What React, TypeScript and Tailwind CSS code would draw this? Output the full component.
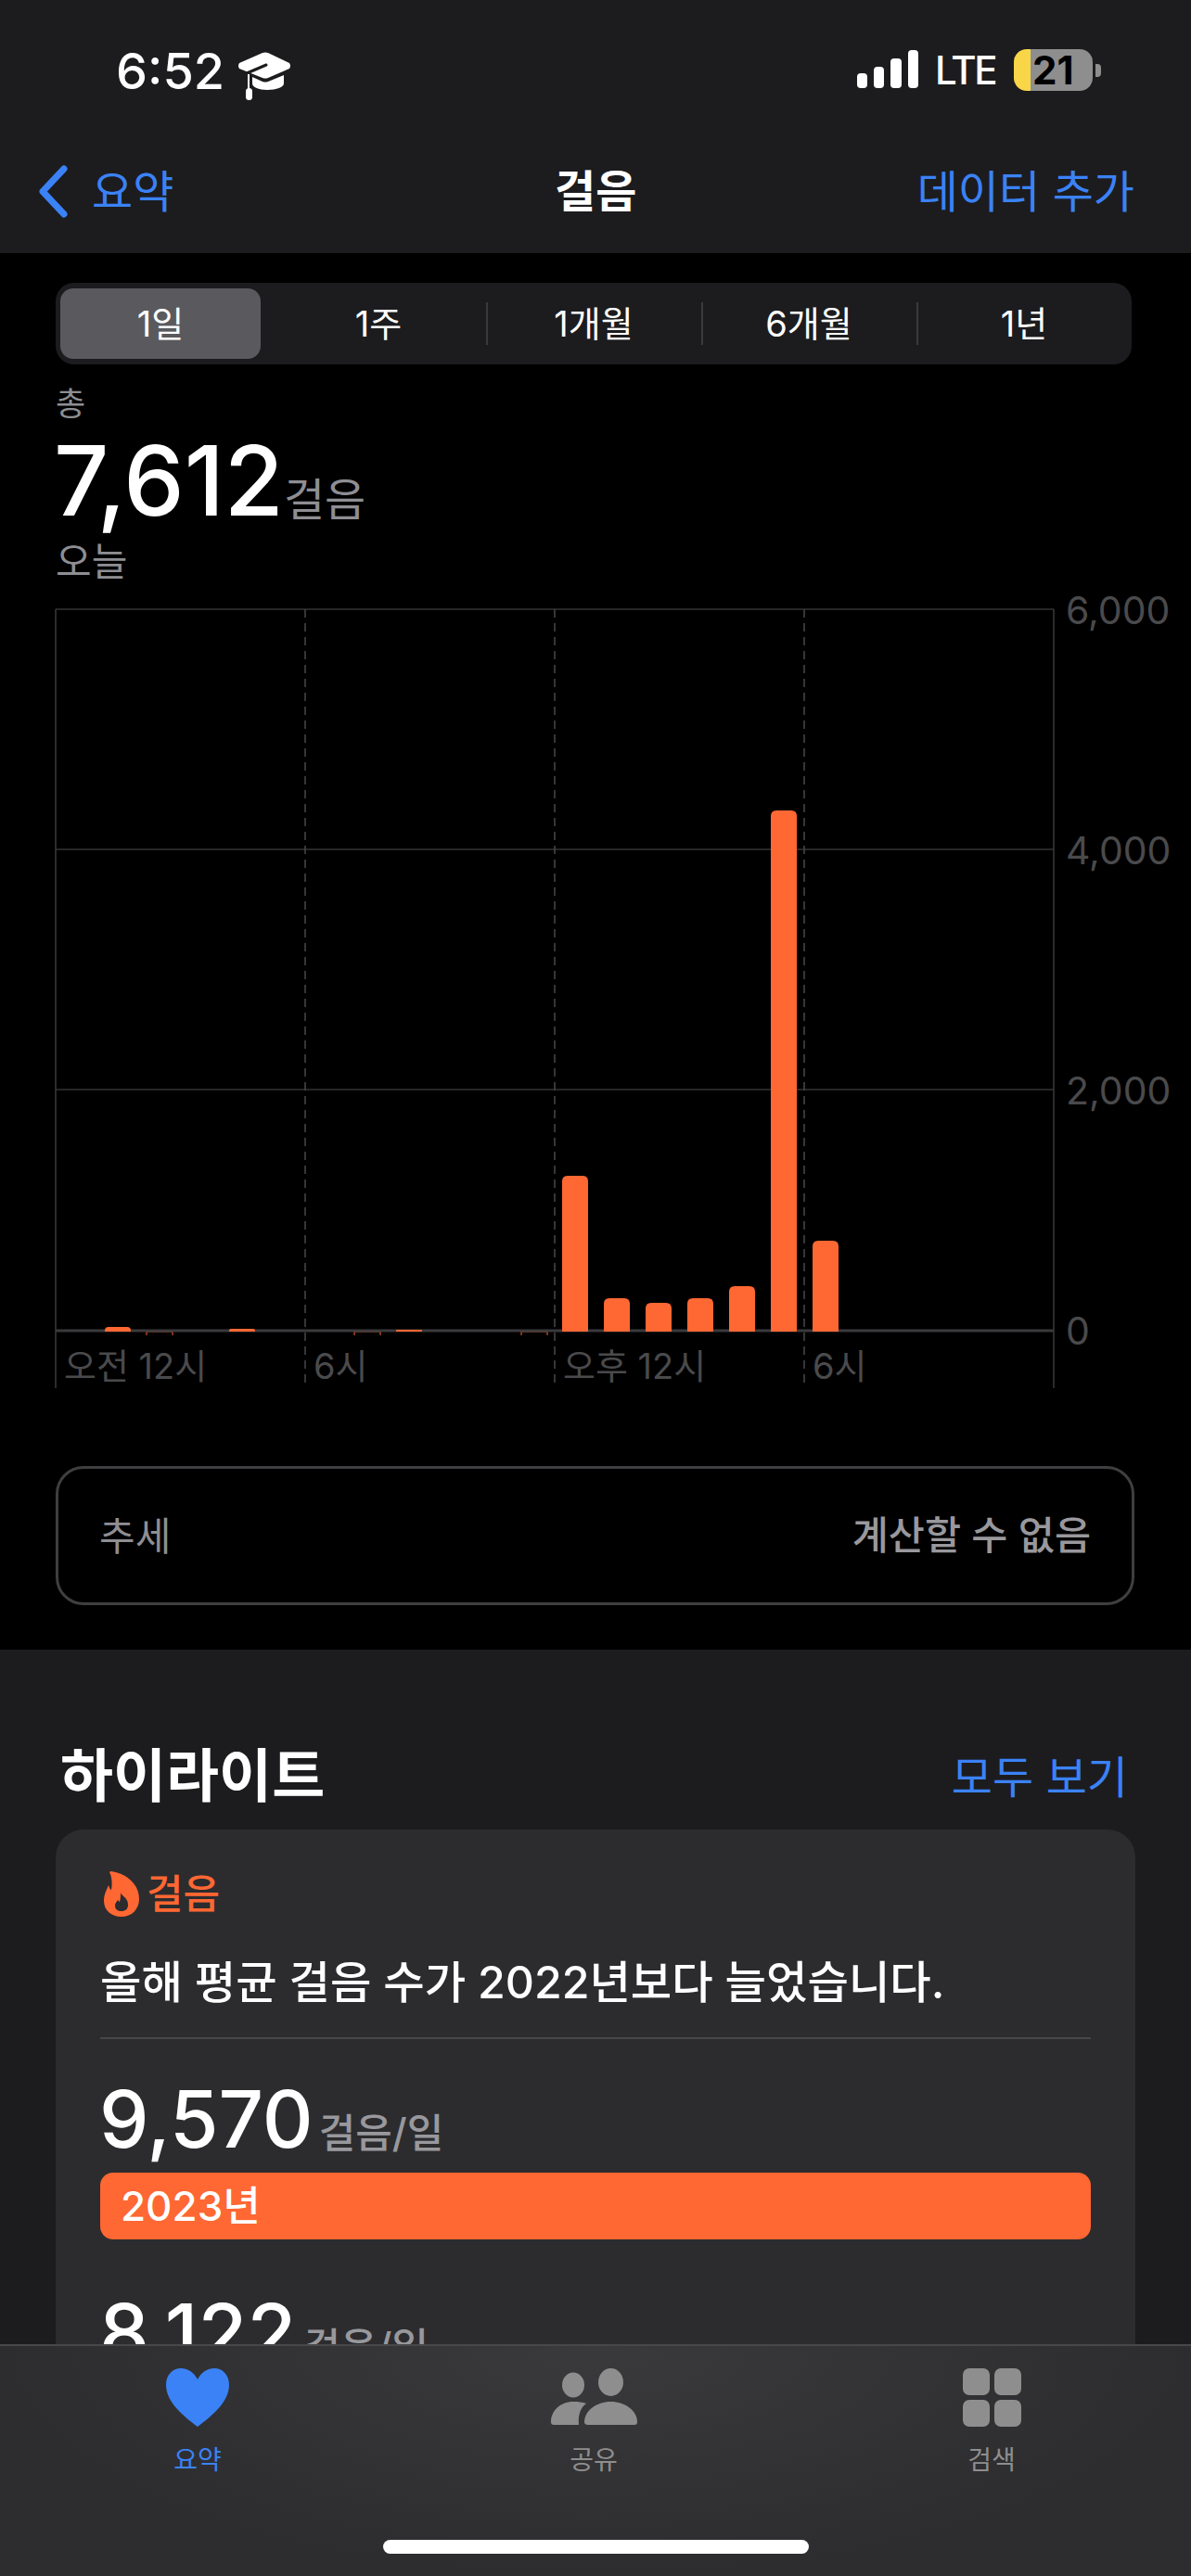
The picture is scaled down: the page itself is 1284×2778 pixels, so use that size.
import React from "react";

const ranges = ["1일", "1주", "1개월", "6개월", "1년"];

// hourly bars: left edge and top in px of the plot
const bars = [
  { x: 113, top: 1431 },
  { x: 247, top: 1433 },
  { x: 427, top: 1434 },
  { x: 606, top: 1268 },
  { x: 651, top: 1400 },
  { x: 696, top: 1405 },
  { x: 741, top: 1400 },
  { x: 786, top: 1387 },
  { x: 831, top: 874 },
  { x: 876, top: 1338 },
];
const tinyBars = [158, 382, 562];

function HatIcon() {
  return (
    <svg width="58" height="52" viewBox="0 0 58 52" fill="#fff">
      <path d="M27 1 Q30 0 33 1 L56 12 Q58 15 56 18 L33 28 Q30 29 27 28 L2 18 Q0 15 2 12Z" />
      <path d="M31 14 L10 23" stroke="#1c1c1e" strokeWidth="3" strokeLinecap="round" />
      <path d="M16 27 L27 32 Q30 33 33 32 L50 25 V34 C50 38 42 41 32 41 C23 41 16 38 16 34Z" />
      <path d="M12 24 V40" stroke="#fff" strokeWidth="2" />
      <rect x="9" y="39" width="7" height="13" rx="3.5" />
    </svg>
  );
}

function StatusBar() {
  return (
    <div className="flex h-[110px] items-start justify-between pl-[125px] pr-[97px] pt-[53px]">
      <div className="flex items-start gap-[14px]">
        <span className="text-[54px] leading-[48px] font-medium text-white">6:52</span>
        <div className="mt-[3px]">
          <HatIcon />
        </div>
      </div>
      <div className="flex items-center">
        <div className="flex h-[45px] items-end gap-[7px] pb-[3px]">
          <div className="h-[16px] w-[11px] rounded-[4px] bg-white" />
          <div className="h-[23px] w-[11px] rounded-[4px] bg-white" />
          <div className="h-[32px] w-[12px] rounded-[4px] bg-white" />
          <div className="h-[41px] w-[11px] rounded-[4px] bg-white" />
        </div>
        <span className="ml-[18px] text-[42px] leading-[45px] font-medium tracking-[-2.5px] text-white">LTE</span>
        <div className="ml-[20px] flex h-[45px] w-[85px]">
          <div className="w-[18px] rounded-l-[14px] bg-[#f9d648]" />
          <div className="flex-1 rounded-r-[14px] bg-[#8e8e8e] pl-[2px] text-[42px] leading-[45px] font-bold text-black">21</div>
        </div>
        <div className="ml-[3px] h-[14px] w-[6px] rounded-r-[4px] bg-[#8e8e8e]" />
      </div>
    </div>
  );
}

function NavBar() {
  return (
    <div className="relative flex h-[163px] items-start justify-between pl-[41px] pr-[61px] pt-[68px]">
      <div className="flex items-center gap-[26px]">
        <svg width="32" height="57" viewBox="0 0 32 57" fill="none" stroke="#3b82f6" strokeWidth="7" strokeLinecap="round" strokeLinejoin="round">
          <path d="M28 4 L5 28.5 L28 53" />
        </svg>
        <span className="text-[48px] leading-[57px] text-[#3b82f6]">요약</span>
      </div>
      <span className="absolute left-[598px] top-[68px] text-[48px] leading-[57px] font-semibold text-white">걸음</span>
      <span className="text-[48px] leading-[57px] text-[#3b82f6]">데이터 추가</span>
    </div>
  );
}

function RangePicker() {
  return (
    <div className="flex h-[88px] w-[1160px] items-center rounded-[20px] bg-[#1c1c1e]">
      {ranges.map((r, i) => (
        <div key={r} className="relative flex h-[76px] flex-1 items-center justify-center text-[38px] text-white">
          {i === 0 ? (
            <div className="mr-[6px] flex h-full w-[216px] items-center justify-center rounded-[14px] bg-[#5a5a5e]">{r}</div>
          ) : (
            r
          )}
          {i > 1 && <div className="absolute left-0 h-[46px] w-[2px] bg-[#3a3a3c]" />}
        </div>
      ))}
    </div>
  );
}

function StepsChart() {
  const labelClass = "fill-[#4a4a4c] text-[41px]";
  const hourClass = "fill-[#4a4a4c] text-[38px]";
  return (
    <svg width="1284" height="870" viewBox="0 630 1284 870" className="-ml-[60px] block">
      <path d="M60 657 H1136 M60 916 H1136 M60 1175 H1136" stroke="#262628" strokeWidth="2" />
      <path d="M60 657 V1497 M1136 657 V1497" stroke="#3a3a3c" strokeWidth="1.5" />
      <path d="M329 657 V1497 M598 657 V1497 M867 657 V1497" stroke="#48484a" strokeWidth="1.5" strokeDasharray="9 6" />
      {tinyBars.map((x) => (
        <path key={x} d={`M${x} 1440 V1436 H${x + 28} V1440`} stroke="#ff6733" strokeWidth="1" fill="none" />
      ))}
      <path d="M60 1435 H1136" stroke="#3a3a3c" strokeWidth="3" />
      {bars.map((b) => {
        const r = Math.min(6, 1435 - b.top);
        return (
          <path
            key={b.x}
            d={`M${b.x} 1436 V${b.top + r} Q${b.x} ${b.top} ${b.x + r} ${b.top} H${b.x + 28 - r} Q${b.x + 28} ${b.top} ${b.x + 28} ${b.top + r} V1436Z`}
            fill="#ff6733"
          />
        );
      })}
      <text x="1149" y="673" className={labelClass}>6,000</text>
      <text x="1149" y="932" className={labelClass}>4,000</text>
      <text x="1149" y="1191" className={labelClass}>2,000</text>
      <text x="1149" y="1450" className={labelClass}>0</text>
      <text x="69" y="1487" className={hourClass}>오전 12시</text>
      <text x="338" y="1487" className={hourClass}>6시</text>
      <text x="607" y="1487" className={hourClass}>오후 12시</text>
      <text x="876" y="1487" className={hourClass}>6시</text>
    </svg>
  );
}

function FlameIcon() {
  return (
    <svg width="38" height="49" viewBox="0 0 38 49" fill="#ff6733" fillRule="evenodd">
      <path d="M7 0 C20 1 38 11 38 30 C38 41 30 49 19 49 C8 49 0 42 0 32 C0 25 3 20 5 15 C6 18 7 20 8 20 C9 14 9 6 6 1Z M18 23 C19 27 26 28 26 36 C26 41 23 43 19 43 C15 43 12 41 12 37 C12 34 14 33 15 31 C16 32 16.5 33 17 33 C18 30 18 26 18 23Z" />
    </svg>
  );
}

function Highlights() {
  return (
    <div className="px-[60px]">
      <div className="flex items-start justify-between pl-[5px] pr-[8px] pt-[97px]">
        <h2 className="text-[62px] leading-[80px] font-bold text-white">하이라이트</h2>
        <span className="mt-[11px] text-[48px] leading-[60px] text-[#3b82f6]">모두 보기</span>
      </div>
      <div className="mt-[17px] h-[900px] rounded-[30px] bg-[#2c2c2e] px-[48px] pt-[44px]">
        <div className="flex items-center gap-[8px] pl-[4px]">
          <FlameIcon />
          <span className="text-[43px] leading-[50px] font-medium text-[#ff6733]">걸음</span>
        </div>
        <p className="mt-[40px] border-b-2 border-[#48484a] pb-[28px] text-[48.3px] leading-[62px] font-medium whitespace-nowrap text-white">
          올해 평균 걸음 수가 2022년보다 늘었습니다.
        </p>
        <div className="mt-[42px] -ml-[1px] flex items-baseline gap-[6px]">
          <span className="text-[85px] leading-[90px] font-medium text-white">9,570</span>
          <span className="text-[43px] leading-[50px] font-medium text-[#98989d]">걸음/일</span>
        </div>
        <div className="mt-[12px] flex h-[72px] items-center rounded-[14px] bg-[#ff6733] pl-[22px] text-[44px] font-medium text-white">
          2023년
        </div>
        <div className="mt-[56px] -ml-[1px] flex items-baseline gap-[8px]">
          <span className="text-[86px] leading-[90px] font-medium text-white">8,122</span>
          <span className="text-[43px] leading-[50px] font-medium text-[#98989d]">걸음/일</span>
        </div>
      </div>
    </div>
  );
}

function TabBar() {
  const labelClass = "mt-[20px] text-[28px] leading-[32px]";
  return (
    <div className="absolute bottom-0 left-0 h-[250px] w-full border-t-2 border-[#48484a] bg-[radial-gradient(ellipse_at_50%_0%,#3a3a3c,#2d2d2f_70%)]">
      <div className="flex pt-[24px]">
        <div className="absolute left-[113px] flex w-[200px] flex-col items-center">
          <svg width="68" height="63" viewBox="0 0 68 63" fill="#3b82f6">
            <path d="M34 12 C30 4 23 0 16 0 C7 0 0 7 0 18 C0 36 18 51 34 63 C50 51 68 36 68 18 C68 7 61 0 52 0 C45 0 38 4 34 12Z" />
          </svg>
          <span className={`${labelClass} text-[#3b82f6]`}>요약</span>
        </div>
        <div className="absolute left-[540px] flex w-[200px] flex-col items-center">
          <svg width="93" height="63" viewBox="0 0 93 63" fill="#8e8e8e">
            <ellipse cx="24" cy="18" rx="12" ry="13.5" />
            <ellipse cx="64.5" cy="15" rx="13.5" ry="15" />
            <path d="M40 61 H90 Q93 61 93 58 C93 46 80 36 64.5 36 C49 36 36 46 36 58 Q36 61 40 61Z" />
            <path d="M3 61 H30 C29 50 32 42 38 38 C34 36.5 29 36 24 36 C10 36 0 46 0 58 Q0 61 3 61Z" />
          </svg>
          <span className={`${labelClass} text-[#8e8e8e]`}>공유</span>
        </div>
        <div className="absolute left-[969px] flex w-[200px] flex-col items-center">
          <svg width="63" height="63" viewBox="0 0 63 63" fill="#8e8e8e">
            <rect x="0" y="0" width="29" height="29" rx="7" />
            <rect x="34" y="0" width="29" height="29" rx="7" />
            <rect x="0" y="34" width="29" height="29" rx="7" />
            <rect x="34" y="34" width="29" height="29" rx="7" />
          </svg>
          <span className={`${labelClass} text-[#8e8e8e]`}>검색</span>
        </div>
      </div>
      <div className="absolute left-[413px] top-[209px] h-[15px] w-[459px] rounded-full bg-white" />
    </div>
  );
}

export default function App() {
  return (
    <div className="relative h-[2778px] w-[1284px] overflow-hidden bg-[#1c1c1e] font-['Inter','Noto_Sans_CJK_KR',sans-serif]">
      <StatusBar />
      <NavBar />
      <div className="h-[1506px] bg-black px-[60px] pt-[32px]">
        <RangePicker />
        <div className="mt-[22px] text-[35px] leading-[40px] text-[#8e8e93]">총</div>
        <div className="mt-[8px] -ml-[2px] flex items-baseline">
          <span className="text-[104px] leading-[110px] font-medium text-white">7,612</span>
          <span className="text-[48px] leading-[50px] text-[#8e8e93]">걸음</span>
        </div>
        <div className="mt-[8px] text-[42px] leading-[49px] text-[#8e8e93]">오늘</div>
        <StepsChart />
        <div className="mt-[81px] flex h-[150px] w-[1163px] items-center justify-between rounded-[30px] border-[3px] border-[#3f3f41] px-[44px]">
          <span className="text-[42px] text-[#8e8e93]">추세</span>
          <span className="text-[42.5px] font-medium text-[#98989d]">계산할 수 없음</span>
        </div>
      </div>
      <Highlights />
      <TabBar />
    </div>
  );
}
